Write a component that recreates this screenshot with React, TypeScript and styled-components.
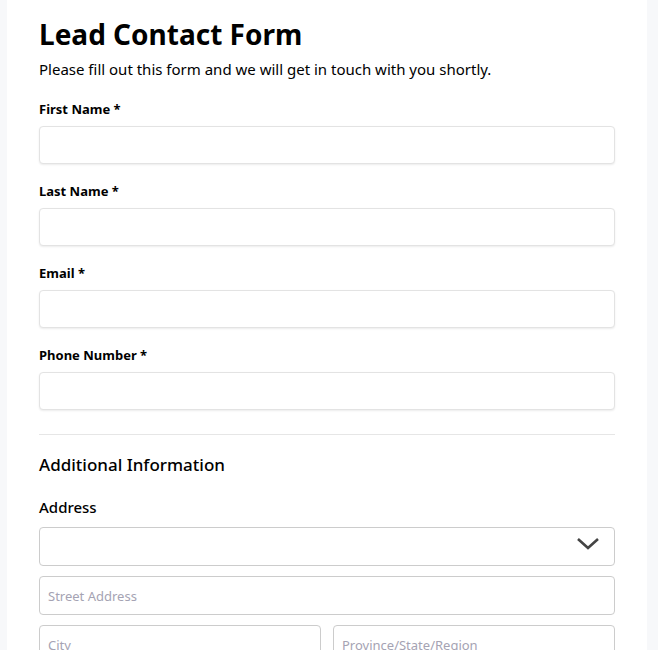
import React from "react";
import styled, { createGlobalStyle } from "styled-components";

const GlobalStyle = createGlobalStyle`
  html, body { margin: 0; padding: 0; background: #f7f8fa; }
  body { font-family: "Noto Sans", "Open Sans", sans-serif; color: #000; }
  * { box-sizing: border-box; }
`;

const Page = styled.div`
  display: flex;
  padding-left: 7px;
  min-height: 650px;
`;

const Card = styled.form`
  width: 640px;
  background: #fff;
  padding: 14px 32px 40px;
  display: flex;
  flex-direction: column;
`;

const Title = styled.h1`
  margin: 0;
  font-size: 28px;
  line-height: 40px;
  font-weight: 700;
`;

const Subtitle = styled.p`
  margin: 3px 0 18px;
  font-size: 15px;
  line-height: 24px;
`;

const Field = styled.div`
  display: flex;
  flex-direction: column;
  margin-bottom: 17px;
`;

const Label = styled.label`
  font-size: 13px;
  font-weight: 700;
  line-height: 20px;
  margin-bottom: 7px;
`;

const TextInput = styled.input`
  height: 38px;
  width: 100%;
  border: 1px solid #e3e3e3;
  border-radius: 4px;
  box-shadow: 0 1px 2px rgba(0, 0, 0, 0.08);
  background: #fff;
  padding: 0 8px;
  font: inherit;
  font-size: 14px;
  outline: none;
`;

const Divider = styled.hr`
  border: 0;
  border-top: 1px solid #e6e6e6;
  margin: 7px 0 17px;
`;

const SectionTitle = styled.h2`
  margin: 0 0 18px;
  font-size: 17px;
  line-height: 26px;
  font-weight: 500;
`;

const GroupLabel = styled.div`
  font-size: 15px;
  font-weight: 500;
  line-height: 22px;
  margin-bottom: 9px;
`;

const SelectBox = styled.div`
  position: relative;
  height: 39px;
  border: 1px solid #cccccc;
  border-radius: 4px;
  background: #fff;
  margin-bottom: 10px;
`;

const Chevron = styled.svg`
  position: absolute;
  right: 14px;
  top: 8px;
`;

const PlainInput = styled.input`
  height: 39px;
  width: 100%;
  border: 1px solid #cccccc;
  border-radius: 4px;
  background: #fff;
  padding: 0 8px;
  font-family: inherit;
  font-size: 13px;
  outline: none;
  &::placeholder { color: #a5a3b3; }
`;

const Row = styled.div`
  display: grid;
  grid-template-columns: 282px 1fr;
  gap: 12px;
  margin-top: 10px;
`;

const fields = ["First Name *", "Last Name *", "Email *", "Phone Number *"];

export default function App() {
  return (
    <>
      <GlobalStyle />
      <Page>
        <Card onSubmit={(e) => e.preventDefault()}>
          <Title>Lead Contact Form</Title>
          <Subtitle>Please fill out this form and we will get in touch with you shortly.</Subtitle>
          {fields.map((f) => (
            <Field key={f}>
              <Label>{f}</Label>
              <TextInput type="text" />
            </Field>
          ))}
          <Divider />
          <SectionTitle>Additional Information</SectionTitle>
          <GroupLabel>Address</GroupLabel>
          <SelectBox>
            <Chevron width="24" height="16" viewBox="0 0 24 16">
              <path d="M2 3 L12 12 L22 3" fill="none" stroke="#444" strokeWidth="2.6" />
            </Chevron>
          </SelectBox>
          <PlainInput placeholder="Street Address" />
          <Row>
            <PlainInput placeholder="City" />
            <PlainInput placeholder="Province/State/Region" />
          </Row>
        </Card>
      </Page>
    </>
  );
}
